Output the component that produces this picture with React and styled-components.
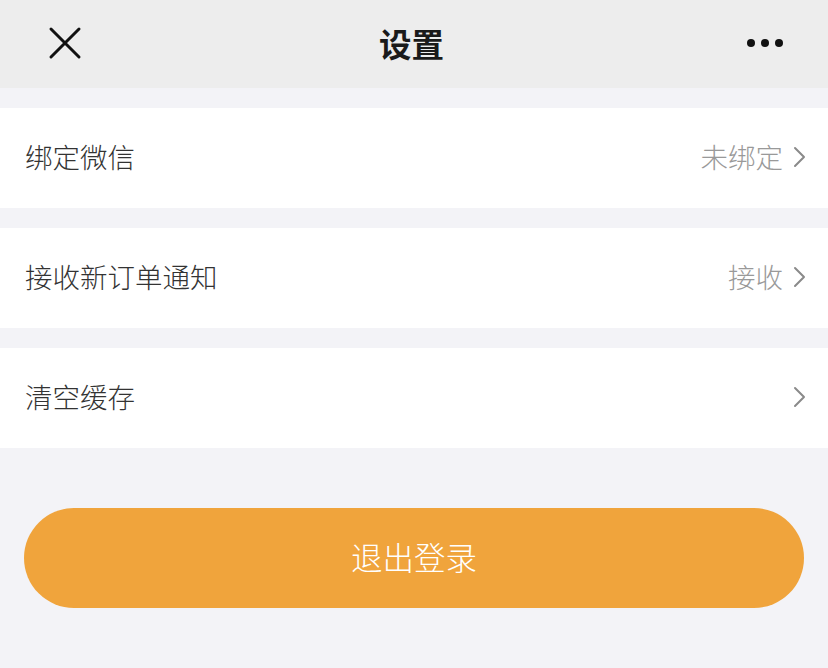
import React from "react";
import styled, { createGlobalStyle } from "styled-components";

const Global = createGlobalStyle`
  html, body { margin: 0; padding: 0; background: #f3f3f7; }
  body { font-family: "Noto Sans CJK SC", "Noto Sans", sans-serif; }
`;

const Page = styled.div`
  width: 828px;
  height: 668px;
  background: #f3f3f7;
  display: flex;
  flex-direction: column;
`;

const Header = styled.header`
  height: 88px;
  background: #ededed;
  display: flex;
  align-items: center;
  justify-content: space-between;
  padding: 0 44px 0 48px;
  position: relative;
`;

const Title = styled.h1`
  position: absolute;
  left: 0;
  right: 0;
  top: 0;
  bottom: 2px;
  display: flex;
  align-items: center;
  justify-content: center;
  margin: 0;
  padding-right: 5px;
  font-size: 32.5px;
  line-height: 1;
  font-weight: 700;
  color: #1a1a1a;
  pointer-events: none;
`;

const IconBtn = styled.div`
  display: flex;
  align-items: center;
  margin-top: -2px;
`;

const List = styled.div`
  display: flex;
  flex-direction: column;
  gap: 20px;
  padding-top: 20px;
`;

const Row = styled.div`
  height: 100px;
  background: #fff;
  display: flex;
  align-items: center;
  justify-content: space-between;
  padding: 0 22px 2px 25px;
  box-sizing: border-box;
  line-height: 1;
`;

const Label = styled.span`
  font-size: 27.5px;
  font-weight: 300;
  color: #333;
`;

const Right = styled.div`
  display: flex;
  align-items: center;
  gap: 10px;
  font-size: 27.5px;
  font-weight: 300;
  color: #999;
`;

const Logout = styled.button`
  margin: 60px 24px 0;
  height: 100px;
  border: none;
  border-radius: 50px;
  background: #f0a43c;
  color: #fff;
  font-family: inherit;
  font-size: 31.5px;
  font-weight: 300;
  line-height: 1;
  padding: 0 0 2px;
`;

const Chevron = () => (
  <svg width="13" height="22" viewBox="0 0 13 22">
    <path d="M2 2 L11 11 L2 20" fill="none" stroke="#8a8a8a" strokeWidth="2" strokeLinecap="round" strokeLinejoin="round" />
  </svg>
);

const items = [
  { label: "绑定微信", value: "未绑定" },
  { label: "接收新订单通知", value: "接收" },
  { label: "清空缓存", value: "" },
];

export default function App() {
  return (
    <Page>
      <Global />
      <Header>
        <IconBtn>
          <svg width="34" height="34" viewBox="0 0 34 34">
            <path d="M3 3 L31 31 M31 3 L3 31" stroke="#111" strokeWidth="3" strokeLinecap="round" />
          </svg>
        </IconBtn>
        <Title>设置</Title>
        <IconBtn>
          <svg width="38" height="10" viewBox="0 0 38 10">
            <circle cx="5" cy="5" r="4" fill="#111" />
            <circle cx="19" cy="5" r="4" fill="#111" />
            <circle cx="33" cy="5" r="4" fill="#111" />
          </svg>
        </IconBtn>
      </Header>
      <List>
        {items.map((it) => (
          <Row key={it.label}>
            <Label>{it.label}</Label>
            <Right>
              {it.value && <span>{it.value}</span>}
              <Chevron />
            </Right>
          </Row>
        ))}
      </List>
      <Logout>退出登录</Logout>
    </Page>
  );
}
